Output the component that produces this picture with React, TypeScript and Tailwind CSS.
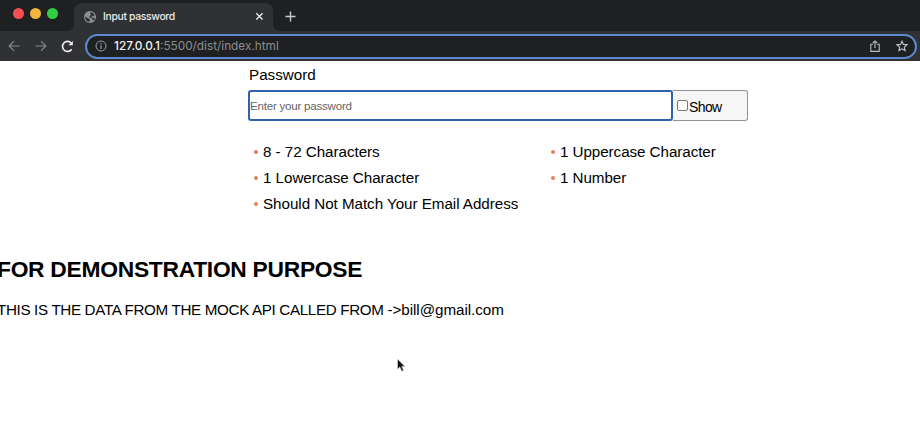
import type { ReactNode } from "react";

function Requirement({ children }: { children: ReactNode }) {
  return (
    <li className="flex h-[26px] items-center">
      <span className="mr-[5px] size-1 shrink-0 rounded-full bg-[#e0805f]" />
      <span className="whitespace-nowrap">{children}</span>
    </li>
  );
}

function GlobeIcon() {
  return (
    <svg className="size-3 shrink-0" viewBox="0 0 12 12">
      <circle cx="6" cy="6" r="6" fill="#8d9196" />
      <path d="M1.2 5.5 4 7.2 5.8 8v1.4l-1 1.5C2.4 10.3 1 8.4 1.2 5.5ZM6.6 1.2 9 2l1.6 2.2-1 1-1.5-.3-.8 1 1.3.8 1.9.2.4.8-1 1.8-1.3-.5-.8-1.7-2.1-.8-.5-1.2 1.8-1.4-.8-1Z" fill="#303236" />
    </svg>
  );
}

function TabStrip() {
  return (
    <div className="flex h-[31px] shrink-0 bg-[#1f2022]">
      <div className="flex w-[74px] shrink-0 gap-[6px] pt-[8px] pl-[13px]">
        <span className="size-[11px] rounded-full bg-[#f64e51]" />
        <span className="size-[11px] rounded-full bg-[#f5b63d]" />
        <span className="size-[11px] rounded-full bg-[#2fd044]" />
      </div>
      <div className="relative mt-[3px] flex h-7 w-[199px] shrink-0 items-center rounded-t-lg bg-[#303135] pr-[9px] pb-px pl-[10px]">
        <svg className="absolute bottom-0 -left-[7px] size-[7px]" viewBox="0 0 7 7">
          <path d="M7 0v7H0a7 7 0 0 0 7-7Z" fill="#303135" />
        </svg>
        <svg className="absolute -right-[7px] bottom-0 size-[7px]" viewBox="0 0 7 7">
          <path d="M0 0v7h7a7 7 0 0 1-7-7Z" fill="#303135" />
        </svg>
        <GlobeIcon />
        <span className="ml-[7px] font-[Inter,sans-serif] text-[10.4px] leading-4 font-medium tracking-[-0.34px] whitespace-nowrap text-[#e8e9eb]">Input password</span>
        <svg className="ml-auto size-[9px]" viewBox="0 0 9 9" fill="none" stroke="#eeeef0" strokeWidth="1.3">
          <path d="m1.3 1.3 6.2 6.2m0-6.2-6.2 6.2" />
        </svg>
      </div>
      <svg className="mt-[11px] ml-[12px] size-[11px]" viewBox="0 0 11 11" fill="none" stroke="#c9cacd" strokeWidth="1.4">
        <path d="M5.5.5v10M.5 5.5h10" />
      </svg>
    </div>
  );
}

function Toolbar() {
  return (
    <div className="flex h-[30px] shrink-0 items-center bg-[#303135] pr-[3px]">
      <svg className="ml-[8px] size-3" viewBox="0 0 12 12" fill="none" stroke="#85878b" strokeWidth="1.2">
        <path d="M11.5 6H1.2M6 1.2 1.2 6 6 10.8" />
      </svg>
      <svg className="ml-[15px] size-3" viewBox="0 0 12 12" fill="none" stroke="#85878b" strokeWidth="1.2">
        <path d="M.5 6h10.3M6 1.2 10.8 6 6 10.8" />
      </svg>
      <svg className="ml-[14px] size-[13px]" viewBox="0 0 13 13" fill="none" stroke="#f0f0f1" strokeWidth="1.6">
        <path d="M10.7 9.2A5 5 0 1 1 10.2 3" />
        <path d="M11.8.9v4.4H7.4Z" fill="#f0f0f1" stroke="none" />
      </svg>
      <div className="ml-[11px] flex h-[25px] flex-1 items-center rounded-full border-2 border-[#5c89d0] bg-[#1f2022] pr-2 pl-2">
        <svg className="size-3" viewBox="0 0 12 12" fill="none" stroke="#9a9ca0">
          <circle cx="6" cy="6" r="5" />
          <path d="M6 5.3V9M6 3v1.2" strokeWidth="1.2" />
        </svg>
        <span className="ml-[7px] font-[Inter,sans-serif] text-[11.8px] leading-4 text-[#8b8c8f]">
          <span className="font-medium text-[#f1f1f2]">127.0.0.1</span>:5500/dist/index.html
        </span>
        <svg className="ml-auto h-3 w-[10px]" viewBox="0 0 10 12" fill="none" stroke="#b9babd" strokeWidth="1.1">
          <path d="M3 4.2H.8v7.2h8.4V4.2H7M5 8V1M2.8 3 5 .9 7.2 3" />
        </svg>
        <svg className="ml-4 -mr-px size-3" viewBox="0 0 12 12" fill="none" stroke="#c6c7ca" strokeWidth="1.1">
          <path d="m6 1.2 1.4 3.2 3.6.4-2.7 2.3.8 3.5L6 8.8l-3.1 1.8.8-3.5L1 4.8l3.6-.4Z" />
        </svg>
      </div>
    </div>
  );
}

export default function App() {
  return (
    <div className="flex h-[431px] w-[920px] flex-col overflow-hidden bg-white font-['Liberation_Sans',Arial,sans-serif] text-[15.2px] leading-[18px] text-black">
      <TabStrip />
      <Toolbar />
      <main className="relative flex-1">
        <form className="ml-[248px] w-[500px] pt-[5px]">
          <label htmlFor="password" className="block pl-[1px]">Password</label>
          <div className="mt-[6px] flex h-[31px]">
            <input
              id="password"
              type="password"
              placeholder="Enter your password"
              className="w-[425px] rounded-[3px] border-2 border-[#3062ab] bg-white p-0 text-[11.6px] tracking-[-0.24px] outline-none placeholder:text-[#666666]"
            />
            <label className="flex flex-1 items-center rounded-r-[3px] border border-l-0 border-[#929292] bg-[#f6f6f6] pl-1">
              <input type="checkbox" className="size-[11px] appearance-none rounded-[2px] border border-[#767676] bg-white" />
              <span className="ml-px pt-0.5 text-[14px] tracking-[-0.6px]">Show</span>
            </label>
          </div>
          <div className="mt-[18px] flex pl-[6px] tracking-[-0.04px]">
            <ul className="w-[298px]">
              <Requirement>8 - 72 Characters</Requirement>
              <Requirement>1 Lowercase Character</Requirement>
              <Requirement>Should Not Match Your Email Address</Requirement>
            </ul>
            <ul className="-ml-px tracking-[-0.06px]">
              <Requirement>1 Uppercase Character</Requirement>
              <Requirement>1 Number</Requirement>
            </ul>
          </div>
        </form>
        <section className="-ml-[3px]">
          <h1 className="mt-[38px] text-[22.8px] leading-[28px] font-bold tracking-[-0.27px] whitespace-nowrap">FOR DEMONSTRATION PURPOSE</h1>
          <p className="mt-[18px] tracking-[-0.34px] whitespace-nowrap">
            THIS IS THE DATA FROM THE MOCK API CALLED FROM <span className="tracking-[-0.05px]">-&gt;bill@gmail.com</span>
          </p>
        </section>
        <svg className="absolute top-[297px] left-[396px] h-[15px] w-[10px]" viewBox="0 0 10 15">
          <path d="M1.5 1v10.2l2.4-2.1 1.8 4.1 1.9-.8-1.8-4h3.1Z" fill="#111" stroke="#ddd" strokeWidth=".6" />
        </svg>
      </main>
    </div>
  );
}
